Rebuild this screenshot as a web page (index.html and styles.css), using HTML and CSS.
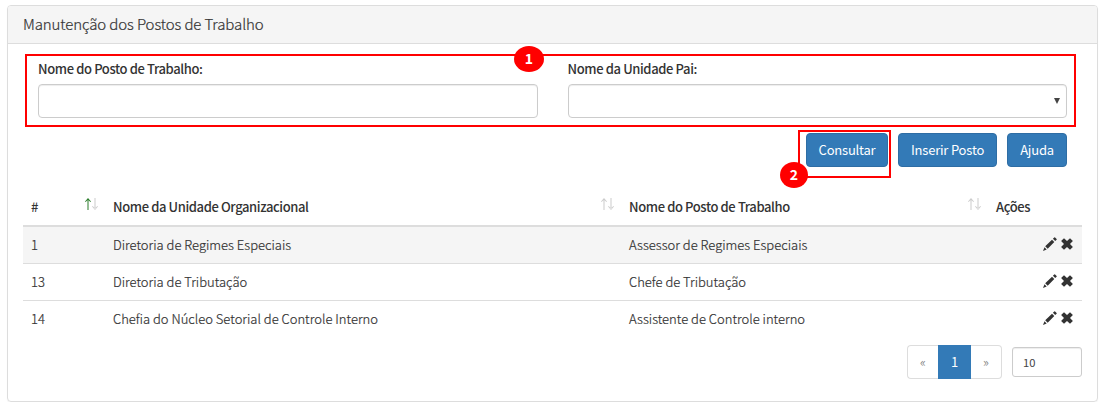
FILE: index.html
```html
<!DOCTYPE html>
<html lang="pt-BR">
<head>
<meta charset="utf-8">
<title>Manutenção dos Postos de Trabalho</title>
<link rel="stylesheet" href="styles.css">
</head>
<body>
<svg class="defs" width="0" height="0">
  <symbol id="pencil" viewBox="0 0 14 14"><path d="M0 14 1.5 10.3 3.7 12.5ZM2.2 9.3 9 2.7 11.3 5 4.7 11.8ZM9.9 1.8 11.3.4Q11.7 0 12.1.4L13.6 1.9Q14 2.3 13.6 2.7L12.2 4.1Z"/></symbol>
  <symbol id="remove" viewBox="0 0 12 12"><path d="M3 .2.1 3.1 3 6 .1 8.9 3 11.8 6 8.9 9 11.8 11.9 8.9 9 6 11.9 3.1 9 .2 6 3.1Z"/></symbol>
  <symbol id="up" viewBox="0 0 6 12"><path d="M2.5 1h1v11h-1zM0 3.5 3 0 6 3.5 5.3 3.9 3 1.6.7 3.9Z"/></symbol>
  <symbol id="down" viewBox="0 0 6 12"><path d="M2.5 0h1v11h-1zM0 8.5 3 12 6 8.5 5.3 8.1 3 10.4.7 8.1Z"/></symbol>
</svg>
<section class="panel">
  <h1 class="panel-heading">Manutenção dos Postos de Trabalho</h1>
  <div class="panel-body">
    <form class="filters">
      <span class="badge badge-one">1</span>
      <div class="field"><label for="posto">Nome do Posto de Trabalho:</label><input id="posto" class="control" type="text"></div>
      <div class="field"><label for="pai">Nome da Unidade Pai:</label><div id="pai" class="control select"><span class="caret"></span></div></div>
    </form>
    <div class="actions">
      <div class="marked"><button class="btn btn-consultar">Consultar</button><span class="badge badge-two">2</span></div>
      <button class="btn btn-inserir">Inserir Posto</button>
      <button class="btn btn-ajuda">Ajuda</button>
    </div>
    <table class="grid">
      <colgroup><col class="c-id"><col class="c-unit"><col class="c-post"><col class="c-act"></colgroup>
      <thead><tr>
        <th><div class="head"><span>#</span><span class="sort asc"><svg><use href="#up"/></svg><svg><use href="#down"/></svg></span></div></th>
        <th><div class="head"><span>Nome da Unidade Organizacional</span><span class="sort"><svg><use href="#up"/></svg><svg><use href="#down"/></svg></span></div></th>
        <th><div class="head"><span>Nome do Posto de Trabalho</span><span class="sort"><svg><use href="#up"/></svg><svg><use href="#down"/></svg></span></div></th>
        <th><div class="head"><span>Ações</span></div></th>
      </tr></thead>
      <tbody>
        <tr class="odd"><td>1</td><td>Diretoria de Regimes Especiais</td><td>Assessor de Regimes Especiais</td><td><div class="icons"><svg class="pencil"><use href="#pencil"/></svg><svg class="remove"><use href="#remove"/></svg></div></td></tr>
        <tr><td>13</td><td>Diretoria de Tributação</td><td>Chefe de Tributação</td><td><div class="icons"><svg class="pencil"><use href="#pencil"/></svg><svg class="remove"><use href="#remove"/></svg></div></td></tr>
        <tr><td>14</td><td>Chefia do Núcleo Setorial de Controle Interno</td><td>Assistente de Controle interno</td><td><div class="icons"><svg class="pencil"><use href="#pencil"/></svg><svg class="remove"><use href="#remove"/></svg></div></td></tr>
      </tbody>
    </table>
    <div class="footer">
      <div class="pagination"><span class="page prev">«</span><span class="page current">1</span><span class="page next">»</span></div>
      <input class="page-size" type="text" value="10">
    </div>
  </div>
</section>
</body>
</html>
```
FILE: styles.css
```css
* { box-sizing: border-box; }
body { margin: 0; padding: 5px 13px 0 7px; background: #fff; color: #333; font: 300 13px/20px "Noto Sans CJK SC", "Noto Sans", sans-serif; }
.defs { position: absolute; }
svg { display: block; fill: currentColor; }
.panel { height: 397px; border: 1px solid #ddd; border-radius: 4px; box-shadow: 0 1px 1px rgba(0,0,0,.05); }
.panel-heading { margin: 0; height: 38px; padding: 8px 15px; background: #f5f5f5; border-bottom: 1px solid #ddd; border-radius: 3px 3px 0 0; font-size: 15px; line-height: 20px; font-weight: 300; letter-spacing: -.11px; -webkit-text-stroke: .2px #333; }
.panel-body { padding: 10px 15px 0; }
.filters { position: relative; display: flex; gap: 30px; width: 1051px; height: 73px; margin-left: 2px; padding: 3px 7px 0 11px; border: 2px solid #f00; }
.field { flex: 1; }
label { display: block; height: 25px; line-height: 20px; font-weight: 500; letter-spacing: -.38px; }
.control { display: block; width: 100%; height: 34px; border: 1px solid #ccc; border-radius: 4px; background: #fff; box-shadow: inset 0 1px 1px rgba(0,0,0,.075); }
.select { display: flex; align-items: center; justify-content: flex-end; padding-right: 6px; }
.caret { width: 6px; height: 6px; background: #444; clip-path: polygon(0 0, 100% 0, 50% 100%); }
.badge { position: absolute; display: flex; align-items: center; justify-content: center; height: 26px; padding-bottom: 2px; border-radius: 50%; background: #f00; color: #fff; font-weight: 700; font-size: 14px; }
.badge-one { left: 487px; top: -10px; width: 30px; }
.badge-two { left: -20px; top: 30px; width: 28px; }
.actions { display: flex; justify-content: flex-end; height: 51px; padding: 3px 15px 0 0; }
.marked { position: relative; width: 93px; height: 48px; padding: 1px 1px 0 6px; border: 2px solid #f00; margin-right: 7px; }
.btn { display: block; height: 34px; padding: 0 0 1px; border: 1px solid #2e6da4; border-radius: 4px; background: #337ab7; color: #fff; font: 400 13px/20px "Noto Sans CJK SC", "Noto Sans", sans-serif; letter-spacing: -.2px; }
.btn-consultar { width: 82px; }
.btn-inserir { width: 99px; margin: 3px 10px 0 0; }
.btn-ajuda { width: 60px; margin-top: 3px; }
.grid { width: 1059px; margin-top: 6px; border-collapse: separate; border-spacing: 0; table-layout: fixed; }
.c-id { width: 82px; } .c-unit { width: 516px; } .c-post { width: 367px; } .c-act { width: 94px; }
th { height: 43px; padding: 0 8px; border-bottom: 2px solid #ddd; text-align: left; font-weight: 500; letter-spacing: -.39px; vertical-align: top; }
.head { display: flex; justify-content: space-between; padding-top: 13px; }
.sort { display: flex; gap: 1px; margin: 1px -1px 0 0; color: #ccc; }
.sort svg { width: 6px; height: 12px; }
.asc svg:first-child { color: #2b7d2b; }
td { height: 37px; padding: 0 8px; border-bottom: 1px solid #ddd; -webkit-text-stroke: .2px #333; }
tr:last-child td { height: 36px; border-bottom: 0; }
.odd td { background: #f5f5f5; }
.icons { display: flex; justify-content: flex-end; align-items: center; gap: 4px; padding-right: 1px; margin-top: -2px; }
.pencil { width: 14px; height: 14px; }
.remove { width: 12px; height: 12px; }
.footer { display: flex; justify-content: flex-end; align-items: center; gap: 10px; width: 1059px; margin-top: 8px; }
.pagination { display: flex; height: 34px; }
.page { display: flex; align-items: center; justify-content: center; border: 1px solid #ddd; color: #777; font-size: 13px; }
.prev { width: 31px; border-right: 0; border-radius: 4px 0 0 4px; }
.current { width: 33px; background: #337ab7; border-color: #337ab7; color: #fff; font-size: 13px; font-weight: 400; }
.next { width: 31px; border-left: 0; border-radius: 0 4px 4px 0; }
.page-size { width: 70px; height: 30px; padding: 0 10px; border: 1px solid #ccc; border-radius: 3px; color: #444; font: 400 11.2px/16px "Noto Sans CJK SC", "Noto Sans", sans-serif; box-shadow: inset 0 1px 1px rgba(0,0,0,.075); }
```
